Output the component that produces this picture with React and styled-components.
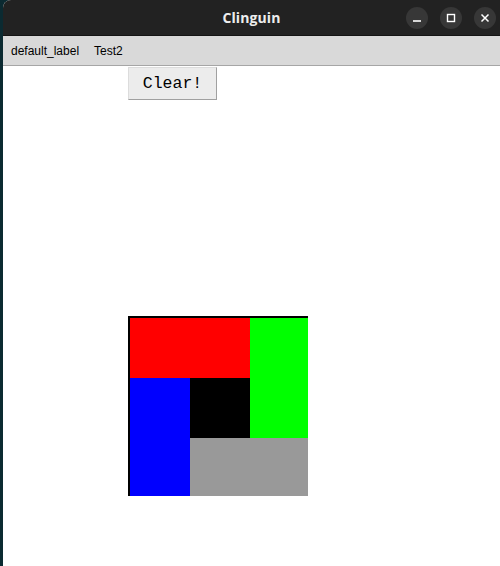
import styled, { createGlobalStyle } from "styled-components";

const GlobalStyle = createGlobalStyle`
  html, body {
    margin: 0;
    padding: 0;
    background: #0b2a31;
  }
  #root {
    height: 566px;
  }
`;

const Desktop = styled.div`
  display: flex;
  height: 566px;
  padding-left: 3px;
  background: #0b2a31;
  overflow: hidden;
`;

const Window = styled.div`
  flex: 1;
  display: flex;
  flex-direction: column;
  background: #ffffff;
  border-top-left-radius: 8px;
  overflow: hidden;
`;

const TitleBar = styled.div`
  position: relative;
  height: 35px;
  flex-shrink: 0;
  display: flex;
  align-items: center;
  justify-content: center;
  background: #222222;
  border-bottom: 1px solid #141414;
`;

const Title = styled.div`
  font-family: "Open Sans", "Noto Sans", sans-serif;
  font-weight: 700;
  font-size: 14px;
  color: #ededed;
  letter-spacing: 0.1px;
`;

const Controls = styled.div`
  position: absolute;
  right: 4px;
  top: 7px;
  display: flex;
  gap: 12px;
`;

const CtrlButton = styled.div`
  width: 22px;
  height: 22px;
  border-radius: 50%;
  background: #373737;
  display: flex;
  align-items: center;
  justify-content: center;
`;

const MenuBar = styled.div`
  height: 29px;
  flex-shrink: 0;
  display: flex;
  align-items: center;
  gap: 15px;
  padding-left: 8px;
  background: #d9d9d9;
  border-bottom: 1px solid #a6a6a6;
`;

const MenuItem = styled.span`
  font-family: "Liberation Sans", Arial, sans-serif;
  font-size: 12px;
  color: #000;
`;

const Content = styled.div`
  flex: 1;
  padding-left: 125px;
`;

const ClearButton = styled.button`
  display: block;
  width: 89px;
  height: 33px;
  margin: 1px 0 0 0;
  padding: 0;
  background: #ececec;
  border: 1px solid;
  border-color: #dcdcdc #a0a0a0 #a0a0a0 #dcdcdc;
  font-family: "Liberation Mono", "Courier New", monospace;
  font-size: 16.5px;
  color: #000;
`;

const Canvas = styled.div`
  margin-top: 216px;
  width: 178px;
  height: 178px;
  border-top: 2px solid #000;
  border-left: 2px solid #000;
  display: grid;
  grid-template-columns: 60px 60px 58px;
  grid-template-rows: 60px 60px 58px;
`;

const Cell = styled.div`
  background: ${(p) => p.$color};
  grid-column: ${(p) => p.$col};
  grid-row: ${(p) => p.$row};
`;

export default function App() {
  return (
    <>
      <GlobalStyle />
      <Desktop>
        <Window>
          <TitleBar>
            <Title>Clinguin</Title>
            <Controls>
              <CtrlButton>
                <svg width="10" height="10" viewBox="0 0 10 10">
                  <line x1="1" y1="8" x2="9" y2="8" stroke="#fff" strokeWidth="1.6" />
                </svg>
              </CtrlButton>
              <CtrlButton>
                <svg width="10" height="10" viewBox="0 0 10 10">
                  <rect x="1.5" y="1.5" width="7" height="7" fill="none" stroke="#fff" strokeWidth="1.4" />
                </svg>
              </CtrlButton>
              <CtrlButton>
                <svg width="10" height="10" viewBox="0 0 10 10">
                  <path d="M1.5 1.5 L8.5 8.5 M8.5 1.5 L1.5 8.5" stroke="#fff" strokeWidth="1.5" />
                </svg>
              </CtrlButton>
            </Controls>
          </TitleBar>
          <MenuBar>
            <MenuItem>default_label</MenuItem>
            <MenuItem>Test2</MenuItem>
          </MenuBar>
          <Content>
            <ClearButton>Clear!</ClearButton>
            <Canvas>
              <Cell $color="#ff0000" $col="1 / 3" $row="1" />
              <Cell $color="#00ff00" $col="3" $row="1 / 3" />
              <Cell $color="#0000ff" $col="1" $row="2 / 4" />
              <Cell $color="#000000" $col="2" $row="2" />
              <Cell $color="#999999" $col="2 / 4" $row="3" />
            </Canvas>
          </Content>
        </Window>
      </Desktop>
    </>
  );
}
